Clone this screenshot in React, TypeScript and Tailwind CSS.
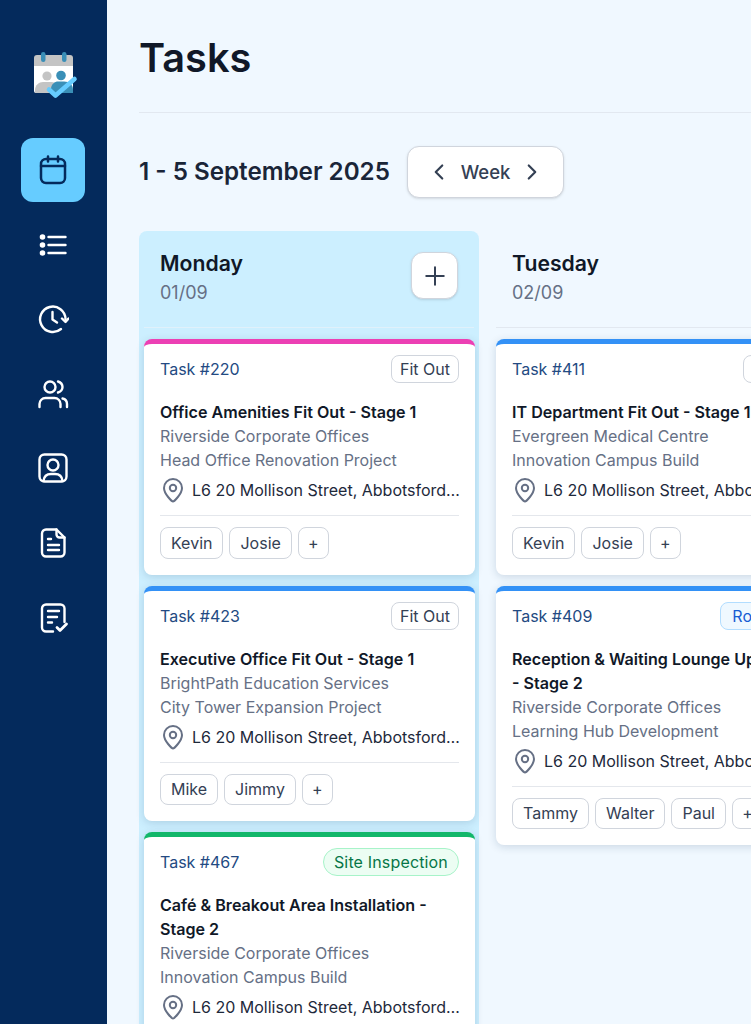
import React from 'react';
import { ChevronLeft, ChevronRight, Plus } from 'lucide-react';

const icon = {
  fill: 'none',
  stroke: 'currentColor',
  strokeWidth: 2.4,
  strokeLinecap: 'round' as const,
  strokeLinejoin: 'round' as const,
};

const Logo = () => (
  <svg width="46" height="50" viewBox="0 0 46 50">
    <path d="M1 8a3 3 0 0 1 3-3h33a3 3 0 0 1 3 3v8H1z" fill="#c4c4c4" />
    <path d="M1 16h39v25a2 2 0 0 1-2 2H3a2 2 0 0 1-2-2z" fill="#ffffff" />
    <rect x="8" y="2" width="4.5" height="10" rx="2.2" fill="#3a8fb7" />
    <rect x="29" y="2" width="4.5" height="10" rx="2.2" fill="#3a8fb7" />
    <circle cx="14" cy="26" r="4.6" fill="#c4c4c4" />
    <path d="M2 43v-3c0-5 4-8 8-8h8c3 0 5 1 6 3l-2 8z" fill="#c4c4c4" />
    <circle cx="28" cy="25.500" r="4.800" fill="#3a8fb7" />
    <path d="M18 43v-4c0-5 4-7.500 7-7.500h6c5 0 9 3 9 8v3.500z" fill="#3a8fb7" />
    <path d="M16 39.500l6.500 6 19-16.500" fill="none" stroke="#66ccff" strokeWidth="4.600" strokeLinecap="round" strokeLinejoin="round" />
  </svg>
);

const CalendarIcon = () => (
  <svg width="32" height="32" viewBox="0 0 32 32" {...icon} strokeWidth={2.5}>
    <rect x="4" y="5" width="24" height="24" rx="5" />
    <path d="M11 2.500v5M21 2.500v5M4 12h24" />
  </svg>
);

const ListIcon = () => (
  <svg width="32" height="32" viewBox="0 0 32 32" {...icon}>
    <path d="M11.500 8h17M11.500 16h17M11.500 24h17" />
    <circle cx="5.500" cy="8" r="1.600" fill="currentColor" />
    <circle cx="5.500" cy="16" r="1.600" fill="currentColor" />
    <circle cx="5.500" cy="24" r="1.600" fill="currentColor" />
  </svg>
);

const HistoryIcon = () => (
  <svg width="32" height="32" viewBox="0 0 32 32" {...icon}>
    <path d="M28.500 16a12.700 12.700 0 1 0-4.500 10" />
    <path d="M15.500 9v7.500l4.500 3" />
    <path d="M25 15.500l3.500 3.500 3-3.500" />
  </svg>
);

const PeopleIcon = () => (
  <svg width="32" height="32" viewBox="0 0 32 32" {...icon}>
    <circle cx="13" cy="9" r="5.500" />
    <path d="M2.500 29v-3a6 6 0 0 1 6-6h9a6 6 0 0 1 6 6v3" />
    <path d="M21 3.500c3 1 4.500 3 4.500 5.500s-1.500 4.500-4.500 5.500" />
    <path d="M25.500 20.500c2.500.5 4.500 2.500 4.500 5.500v3" />
  </svg>
);

const ProfileIcon = () => (
  <svg width="32" height="32" viewBox="0 0 32 32" {...icon}>
    <rect x="2.500" y="2.500" width="27" height="27" rx="5" />
    <circle cx="16" cy="13" r="5.500" />
    <path d="M6.500 29c.5-5 4-7 7.500-7h4c3.500 0 7 2 7.500 7" />
  </svg>
);

const DocumentIcon = () => (
  <svg width="32" height="32" viewBox="0 0 32 32" {...icon}>
    <path d="M9 2.500h10.500L27.500 10.500v15a4 4 0 0 1-4 4H9a4 4 0 0 1-4-4v-19a4 4 0 0 1 4-4z" />
    <path d="M19.500 2.500v5a3 3 0 0 0 3 3h5" />
    <path d="M11 12h3M11 18h11M11 23h11" />
  </svg>
);

const DocumentCheckIcon = () => (
  <svg width="32" height="32" viewBox="0 0 32 32" {...icon}>
    <path d="M16 29.500H9a4 4 0 0 1-4-4v-19a4 4 0 0 1 4-4h14.500a4 4 0 0 1 4 4V20" />
    <path d="M11 9h11M11 15h9M11 20.500h4" />
    <path d="M20 25.500l3 3 6.500-6.500" strokeWidth={2.8} />
  </svg>
);

const PinIcon = () => (
  <svg width="24" height="26" viewBox="0 0 24 26" fill="none" stroke="#667085" strokeWidth="2" strokeLinejoin="round" className="shrink-0">
    <path d="M12 24.500c-1 0-9-7.500-9-13.500a9 9 0 0 1 18 0c0 6-8 13.500-9 13.500z" />
    <circle cx="12" cy="11" r="3.200" />
  </svg>
);

type TaskProps = {
  id: string;
  accent: string;
  tag: string;
  tagClass: string;
  title: string;
  client: string;
  project: string;
  people: string[];
};

const TaskCard: React.FC<TaskProps> = ({ id, accent, tag, tagClass, title, client, project, people }) => (
  <div className={`w-[331px] shrink-0 rounded-lg border-t-[5px] bg-white px-4 pt-[11px] pb-4 shadow-[0_2px_8px_rgba(15,50,90,0.16)] ${accent}`}>
    <div className="flex h-7 items-center justify-between">
      <span className="text-base text-[#234a82]">Task #{id}</span>
      <span className={`flex h-7 items-center border text-base leading-none ${tagClass}`}>{tag}</span>
    </div>
    <div className="mt-[17px] text-[16.1px] leading-6 font-semibold text-[#101828]">{title}</div>
    <div className="text-base leading-6 text-[#667085]">{client}</div>
    <div className="text-base leading-6 text-[#667085]">{project}</div>
    <div className="mt-1.5 -mr-[3px] flex h-6 items-center gap-[7px] pl-[1px]">
      <PinIcon />
      <span className="min-w-0 flex-1 truncate text-base leading-6 text-[#1e293b]">L6 20 Mollison Street, Abbotsford VIC 3067</span>
    </div>
    <div className="mt-[13px] mb-[11px] h-px bg-[#e4e7ec]" />
    <div className="flex gap-1.5">
      {people.map((name) => (
        <span key={name} className="flex h-[31.5px] items-center rounded-lg border border-[#d0d5dd] px-[10px] text-base text-[#344054]">
          {name}
        </span>
      ))}
      <span className="flex h-[31.5px] w-[31px] items-center justify-center rounded-lg border border-[#d0d5dd] text-base text-[#344054]">+</span>
    </div>
  </div>
);

const fitOut = 'rounded-lg border-[#d0d5dd] px-2 text-[#344054]';
const pink = 'border-[#ec40b4]';
const blue = 'border-[#3391f6]';
const green = 'border-[#12b76a]';

const monday: TaskProps[] = [
  { id: '220', accent: pink, tag: 'Fit Out', tagClass: fitOut, title: 'Office Amenities Fit Out - Stage 1', client: 'Riverside Corporate Offices', project: 'Head Office Renovation Project', people: ['Kevin', 'Josie'] },
  { id: '423', accent: blue, tag: 'Fit Out', tagClass: fitOut, title: 'Executive Office Fit Out - Stage 1', client: 'BrightPath Education Services', project: 'City Tower Expansion Project', people: ['Mike', 'Jimmy'] },
  { id: '467', accent: green, tag: 'Site Inspection', tagClass: 'rounded-full border-[#a7f3c9] bg-[#ecfdf3] px-[10px] tracking-[0.01em] text-[#067647]', title: 'Café & Breakout Area Installation - Stage 2', client: 'Riverside Corporate Offices', project: 'Innovation Campus Build', people: ['Kevin', 'Josie'] },
];

const tuesday: TaskProps[] = [
  { id: '411', accent: blue, tag: 'Fit Out', tagClass: fitOut, title: 'IT Department Fit Out - Stage 1', client: 'Evergreen Medical Centre', project: 'Innovation Campus Build', people: ['Kevin', 'Josie'] },
  { id: '409', accent: blue, tag: 'Rough In', tagClass: 'rounded-lg border-[#b2ddff] bg-[#eff8ff] px-[11px] text-[#175cd3]', title: 'Reception & Waiting Lounge Upgrade -\u00a0Stage 2', client: 'Riverside Corporate Offices', project: 'Learning Hub Development', people: ['Tammy', 'Walter', 'Paul'] },
];

const Column: React.FC<{ day: string; date: string; tasks: TaskProps[]; active?: boolean }> = ({ day, date, tasks, active }) => (
  <div className={`flex w-[340px] shrink-0 flex-col rounded-t-lg px-[5px] ${active ? 'bg-[#ccefff]' : ''}`}>
    <div className={`flex h-[97px] shrink-0 items-start justify-between border-b pt-[21px] pr-4 pl-4 ${active ? 'border-[#e0f1fb]' : 'border-[#e2e8f0]'}`}>
      <div>
        <div className="text-[21.2px] leading-[23px] font-semibold text-[#101828]">{day}</div>
        <div className="mt-[6px] text-lg leading-6 text-[#667085]">{date}</div>
      </div>
      {active && (
        <button className="flex h-[47px] w-[47px] items-center justify-center rounded-xl border border-[#d0d5dd] bg-white text-[#344054] shadow-sm">
          <Plus size={30} strokeWidth={1.6} />
        </button>
      )}
    </div>
    <div className="mt-[11px] flex flex-col gap-[11px]">
      {tasks.map((task) => (
        <TaskCard key={task.id} {...task} />
      ))}
    </div>
  </div>
);

export default function App() {
  return (
    <div className="flex h-screen overflow-hidden bg-[#f0f8ff] font-['Inter',sans-serif]">
      {/* Sidebar */}
      <aside className="flex w-[107px] shrink-0 flex-col items-start bg-[#042a5c] pl-[21px] text-white">
        <div className="mt-[50px] mb-[38px] ml-3">
          <Logo />
        </div>
        <div className="flex flex-col gap-[10.6px]">
          <div className="flex h-16 w-16 items-center justify-center rounded-xl bg-[#66ccff] text-[#042a5c]">
            <CalendarIcon />
          </div>
          <div className="flex h-16 w-16 items-center justify-center"><ListIcon /></div>
          <div className="flex h-16 w-16 items-center justify-center"><HistoryIcon /></div>
          <div className="flex h-16 w-16 items-center justify-center"><PeopleIcon /></div>
          <div className="flex h-16 w-16 items-center justify-center"><ProfileIcon /></div>
          <div className="flex h-16 w-16 items-center justify-center"><DocumentIcon /></div>
          <div className="flex h-16 w-16 items-center justify-center"><DocumentCheckIcon /></div>
        </div>
      </aside>

      {/* Content */}
      <main className="min-w-0 flex-1 overflow-hidden pl-8">
        <div className="flex h-[113px] w-[700px] items-start border-b border-[#e2e8f0] pt-[33px]">
          <h1 className="text-[39.7px] leading-[50px] font-semibold text-[#101828]">Tasks</h1>
        </div>

        <div className="mt-[33px] flex items-center gap-[17px]">
          <span className="mt-px w-[251px] text-[24.2px] font-semibold whitespace-nowrap text-[#1a2538]">1 - 5 September 2025</span>
          <div className="flex h-[52px] w-[157px] items-center justify-center gap-[9px] rounded-xl border border-[#d0d5dd] bg-white text-[#344054] shadow-sm">
            <ChevronLeft size={26} strokeWidth={2} />
            <span className="mt-px text-[18.5px] font-medium">Week</span>
            <ChevronRight size={26} strokeWidth={2} />
          </div>
        </div>

        <div className="mt-[33px] flex gap-3">
          <Column day="Monday" date="01/09" tasks={monday} active />
          <Column day="Tuesday" date="02/09" tasks={tuesday} />
        </div>
      </main>
    </div>
  );
}
